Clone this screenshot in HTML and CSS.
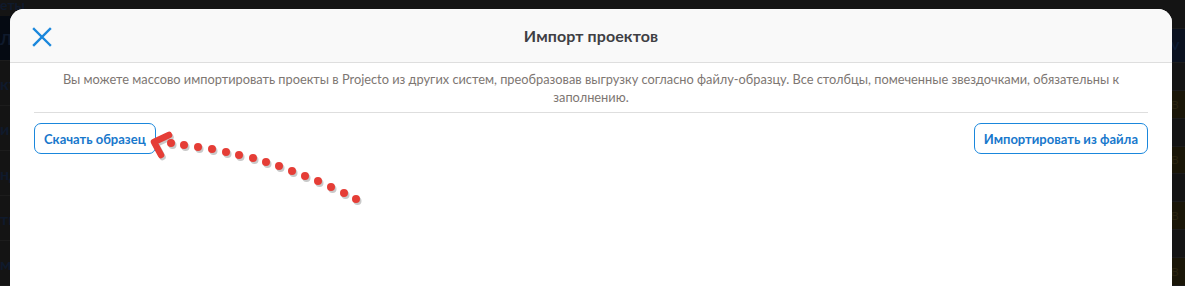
FILE: index.html
```html
<!DOCTYPE html>
<html lang="ru">
<head>
<meta charset="utf-8">
<link rel="stylesheet" href="styles.css">
</head>
<body>
<div class="backdrop">
  <div class="side">
    <div class="side-row side-top">еты</div>
    <div class="side-row side-active">Ли</div>
    <div class="side-row">кт</div>
    <div class="side-row">и и</div>
    <div class="side-row">нд</div>
    <div class="side-row">тк</div>
    <div class="side-row">ме</div>
  </div>
  <div class="right">
    <div class="r-row"></div>
    <div class="r-row r-head">V</div>
    <div class="r-row"></div>
    <div class="r-row r-b">B</div>
    <div class="r-row"></div>
    <div class="r-row r-b">B</div>
    <div class="r-row"></div>
    <div class="r-row r-b">B</div>
    <div class="r-row"></div>
    <div class="r-row r-b">B</div>
  </div>
</div>

<div class="modal">
  <div class="modal-head">
    <svg class="close" width="20" height="20" viewBox="0 0 20 20"><path d="M2 2 L18 18 M18 2 L2 18" stroke="#1a87dc" stroke-width="2.4" stroke-linecap="square" fill="none"/></svg>
    <div class="title">Импорт проектов</div>
  </div>
  <div class="modal-body">
    <p class="desc">Вы можете массово импортировать проекты в Projecto из других систем, преобразовав выгрузку согласно файлу-образцу. Все столбцы, помеченные звездочками, обязательны к заполнению.</p>
    <div class="actions">
      <button class="btn">Скачать образец</button>
      <button class="btn">Импортировать из файла</button>
    </div>
  </div>
  <svg class="arrow" width="230" height="90" viewBox="0 0 230 90">
    <g fill="#c9c9c9" transform="translate(1.5,2)">
      <circle cx="31" cy="23" r="4"/><circle cx="44" cy="25" r="4"/><circle cx="58" cy="27" r="4"/><circle cx="72" cy="29" r="4"/><circle cx="86" cy="32" r="4"/><circle cx="99" cy="35" r="4"/><circle cx="113" cy="38" r="4"/><circle cx="126" cy="42" r="4"/><circle cx="139" cy="46" r="4"/><circle cx="152" cy="51" r="4"/><circle cx="165" cy="56" r="4"/><circle cx="178" cy="61" r="4"/><circle cx="191" cy="67" r="4"/><circle cx="204" cy="73" r="4"/><circle cx="216" cy="79" r="4"/>
      <path d="M29 15 L14 22 L21 35" stroke="#c9c9c9" stroke-width="6.5" stroke-linecap="round" stroke-linejoin="round" fill="none"/>
    </g>
    <g fill="#e53d36">
      <circle cx="31" cy="23" r="4"/><circle cx="44" cy="25" r="4"/><circle cx="58" cy="27" r="4"/><circle cx="72" cy="29" r="4"/><circle cx="86" cy="32" r="4"/><circle cx="99" cy="35" r="4"/><circle cx="113" cy="38" r="4"/><circle cx="126" cy="42" r="4"/><circle cx="139" cy="46" r="4"/><circle cx="152" cy="51" r="4"/><circle cx="165" cy="56" r="4"/><circle cx="178" cy="61" r="4"/><circle cx="191" cy="67" r="4"/><circle cx="204" cy="73" r="4"/><circle cx="216" cy="79" r="4"/>
      <path d="M29 15 L14 22 L21 35" stroke="#e53d36" stroke-width="6.5" stroke-linecap="round" stroke-linejoin="round" fill="none"/>
    </g>
  </svg>
</div>
</body>
</html>
```

FILE: styles.css
```css
html, body {
  margin: 0;
  padding: 0;
}
body {
  width: 1185px;
  height: 286px;
  overflow: hidden;
  background: #141414;
  font-family: "Lato", "Noto Sans", sans-serif;
  position: relative;
}
.backdrop {
  display: flex;
  justify-content: space-between;
  height: 286px;
}
.side {
  width: 30px;
  display: flex;
  flex-direction: column;
}
.side-row {
  height: 45px;
  border-bottom: 1px solid #1c1c1c;
  color: #0f1a2c;
  font-size: 16px;
  font-weight: 700;
  display: flex;
  align-items: center;
  box-sizing: border-box;
}
.side-top {
  height: 20px;
  align-items: flex-start;
  margin-top: -4px;
  font-size: 14px;
  border-bottom: none;
}
.side-active {
  background: #050a12;
}
.right {
  width: 40px;
  display: flex;
  flex-direction: column;
  padding-left: 22px;
  box-sizing: border-box;
}
.r-row {
  height: 27px;
  border-bottom: 1px solid #1c1c1c;
  color: #2a2410;
  font-size: 12px;
  display: flex;
  align-items: center;
  padding-left: 4px;
}
.r-row:first-child { height: 28px; }
.r-head {
  background: #0b1220;
  color: #0f1e36;
  font-weight: 700;
  height: 33px;
}
.r-b {
  background: #1a1608;
}

.modal {
  position: absolute;
  left: 10px;
  top: 9px;
  width: 1162px;
  height: 300px;
  background: #fff;
  border-radius: 14px;
  overflow: hidden;
}
.modal-head {
  height: 53px;
  background: #f9f9f9;
  border-bottom: 1px solid #dedede;
  display: flex;
  align-items: center;
  justify-content: center;
  position: relative;
}
.close {
  position: absolute;
  left: 22px;
  top: 18px;
}
.title {
  font-size: 16px;
  font-weight: 700;
  color: #3f3f44;
  letter-spacing: 0.1px;
}
.modal-body {
  padding: 0 24px;
}
.desc {
  margin: 0;
  padding: 7px 20px 6px;
  text-align: center;
  font-size: 12.8px;
  line-height: 18px;
  color: #7d7672;
  border-bottom: 1px solid #dedede;
}
.actions {
  display: flex;
  justify-content: space-between;
  padding-top: 10px;
}
.btn {
  height: 31px;
  padding: 0 9px;
  background: #fff;
  border: 1px solid #1a87dc;
  border-radius: 7px;
  color: #1878cc;
  font-family: "Lato", "Noto Sans", sans-serif;
  font-size: 13px;
  font-weight: 700;
}
.arrow {
  position: absolute;
  left: 130px;
  top: 111px;
}
```
